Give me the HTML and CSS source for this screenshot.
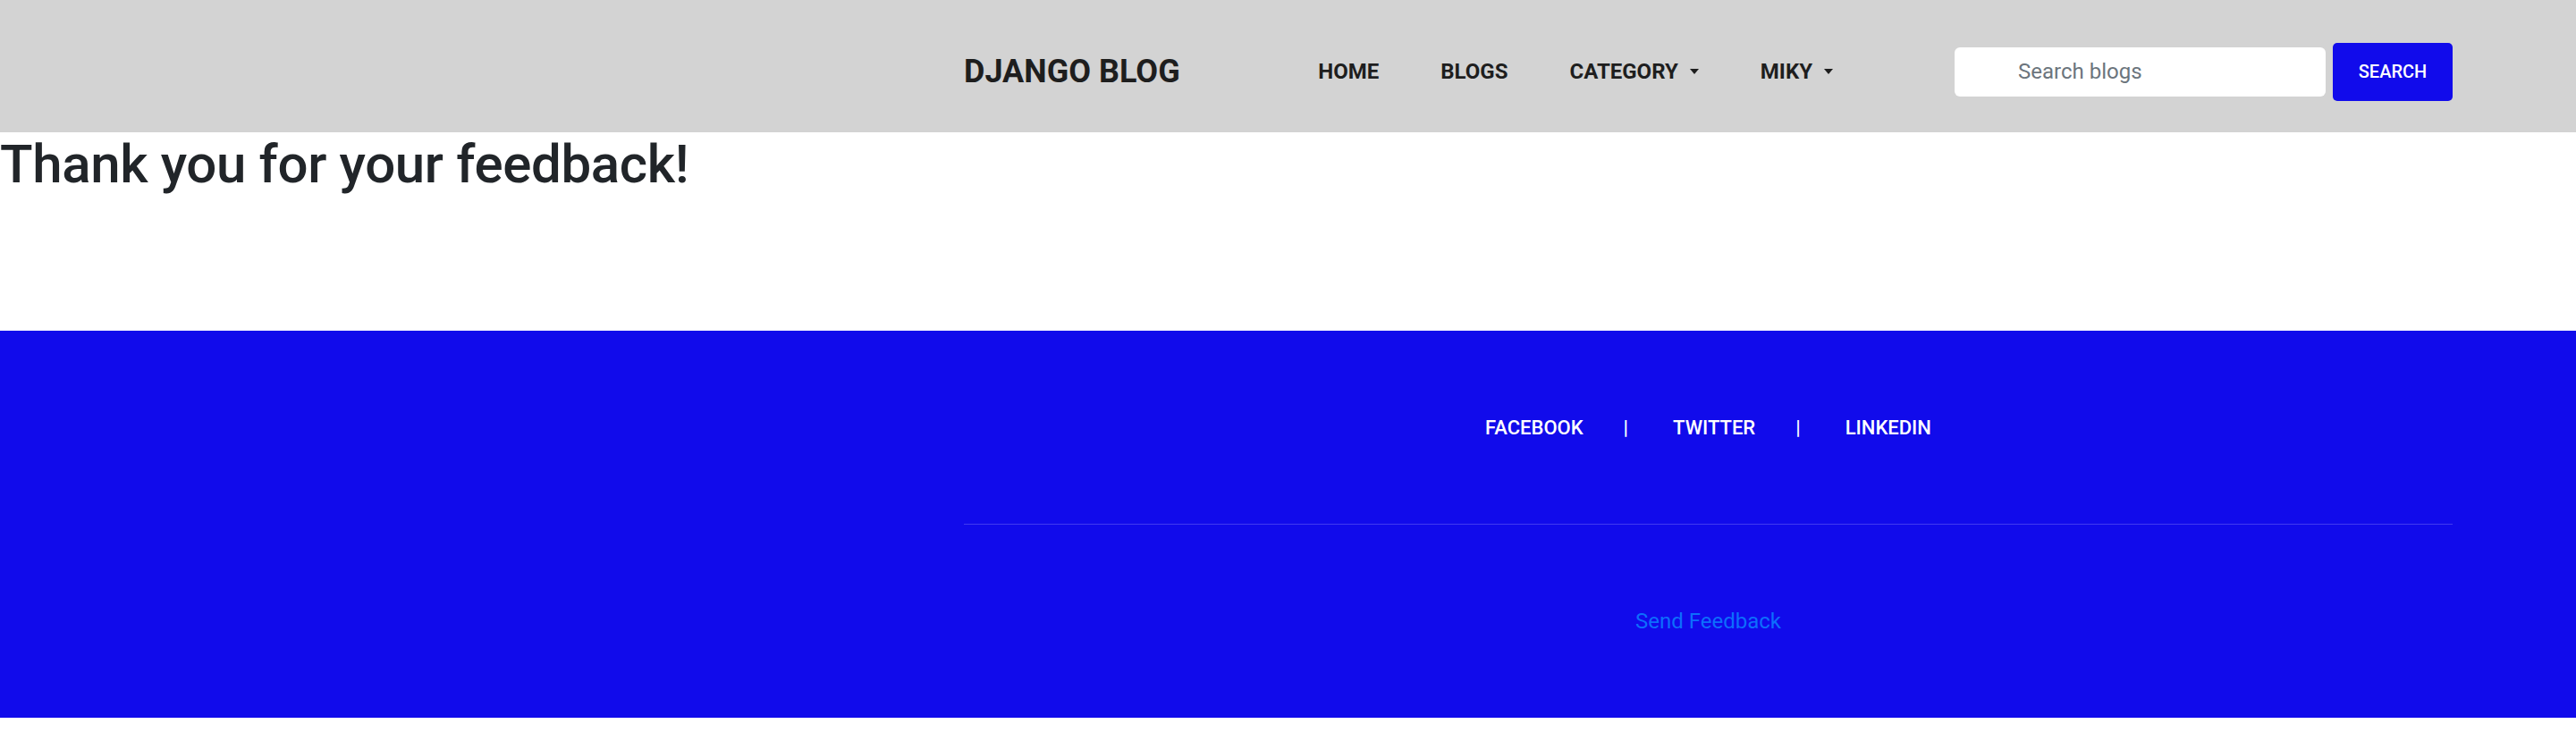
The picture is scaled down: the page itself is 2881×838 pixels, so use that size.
FILE: index.html
```html
<!DOCTYPE html>
<html lang="en">
<head>
<meta charset="utf-8">
<title>Django Blog</title>
<link rel="stylesheet" href="styles.css">
</head>
<body>
<header class="navbar">
  <div class="nav-inner">
    <a class="brand" href="#">DJANGO BLOG</a>
    <ul class="nav-links">
      <li><a href="#">HOME</a></li>
      <li><a href="#">BLOGS</a></li>
      <li><a class="dropdown" href="#">CATEGORY</a></li>
      <li><a class="dropdown" href="#">MIKY</a></li>
    </ul>
    <form class="search">
      <input type="search" placeholder="Search blogs">
      <button type="button">SEARCH</button>
    </form>
  </div>
</header>
<main class="content">
  <h1 class="title">Thank you for your feedback!</h1>
</main>
<footer class="footer">
  <div class="footer-inner">
    <ul class="social">
      <li><a href="#">FACEBOOK</a></li>
      <li class="sep">|</li>
      <li><a href="#">TWITTER</a></li>
      <li class="sep">|</li>
      <li><a href="#">LINKEDIN</a></li>
    </ul>
    <hr class="divider">
    <div class="feedback"><a href="#">Send Feedback</a></div>
  </div>
</footer>
</body>
</html>
```
FILE: styles.css
```css
* { box-sizing: border-box; }
html, body { margin: 0; padding: 0; }
body {
  font-family: Roboto, "Liberation Sans", Arial, sans-serif;
  color: #212529;
  background: #fff;
}
a { text-decoration: none; }

.navbar {
  background: #d3d3d3;
  height: 148px;
  padding-top: 12px;
  display: flex;
  align-items: center;
}
.nav-inner {
  margin-left: 1078px;
  width: 1665px;
  display: flex;
  align-items: center;
}
.brand {
  font-size: 36px;
  font-weight: 700;
  color: #1e1e1e;
  line-height: 1.2;
  margin-top: 2px;
}
.nav-links {
  list-style: none;
  margin: 0 136px 0 auto;
  padding: 0;
  display: flex;
  align-items: center;
  gap: 69px;
}
.nav-links a {
  display: inline-flex;
  align-items: center;
  font-size: 24px;
  font-weight: 700;
  color: #1e1e1e;
  line-height: 1.5;
}
.nav-links .dropdown::after {
  content: "";
  display: inline-block;
  margin-left: 13px;
  border-top: 6px solid #1e1e1e;
  border-left: 5.5px solid transparent;
  border-right: 5.5px solid transparent;
}
.search {
  display: flex;
  align-items: center;
  gap: 8px;
  margin: 0;
}
.search input {
  width: 415px;
  height: 55px;
  border: 0;
  border-radius: 6px;
  background: #fff;
  padding: 0 12px 0 71px;
  font-family: Roboto, "Liberation Sans", Arial, sans-serif;
  font-size: 24px;
  color: #495057;
  outline: none;
}
.search input::placeholder { color: #6c757d; }
.search button {
  width: 134px;
  height: 65px;
  border: 0;
  border-radius: 5px;
  background: #110beb;
  color: #fff;
  font-family: Roboto, "Liberation Sans", Arial, sans-serif;
  font-size: 20px;
  font-weight: 500;
  padding: 0;
}

.content { height: 222px; }
.title {
  margin: 0;
  font-size: 60px;
  line-height: 72px;
  font-weight: 500;
  letter-spacing: -0.35px;
  color: #212529;
}

.footer {
  background: #110beb;
  height: 433px;
}
.footer-inner {
  margin-left: 1078px;
  width: 1665px;
  padding-top: 93px;
}
.social {
  list-style: none;
  margin: 0;
  padding: 0;
  display: flex;
  justify-content: center;
  font-size: 22px;
  font-weight: 500;
  line-height: 32px;
  color: #fff;
}
.social a { color: #fff; }
.social .sep { margin: 0 50px 0 45px; }
.divider {
  margin: 91px 0 0;
  border: 0;
  border-top: 1px solid rgba(255,255,255,0.2);
  height: 0;
}
.feedback {
  margin-top: 90px;
  text-align: center;
  font-size: 24px;
  line-height: 36px;
}
.feedback a { color: #0d6efd; }
```
